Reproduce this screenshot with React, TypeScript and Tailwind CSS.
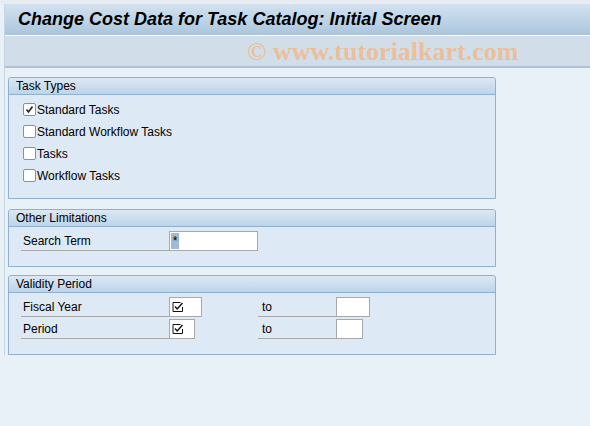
const font = { fontFamily: '"Liberation Sans", Arial, sans-serif' }

function Check({ checked }: { checked?: boolean }) {
  return (
    <span className="flex h-[13px] w-[13px] items-center justify-center rounded-[2px] border border-[#8f8f8f] bg-white">
      {checked && (
        <svg width="9" height="9" viewBox="0 0 9 9">
          <path d="M1.5 4.5 L3.5 7 L7.5 1.5" fill="none" stroke="#222" strokeWidth="1.6" />
        </svg>
      )}
    </span>
  )
}

function ReqMark() {
  return (
    <svg width="12" height="12" viewBox="0 0 12 12">
      <path d="M1 1.5 H8.5 M1 1.5 V10.5 H10.5 V6" fill="none" stroke="#111" strokeWidth="1" />
      <path d="M3 5.5 L5.2 8 L10.5 2" fill="none" stroke="#111" strokeWidth="1.4" />
    </svg>
  )
}

function Group({ title, children, className }: { title: string; children: React.ReactNode; className?: string }) {
  return (
    <div className={`w-[488px] rounded-t-[3px] border border-[#8fb0cf] bg-[#dde9f4] ${className ?? ""}`}>
      <div className="h-[17px] rounded-t-[3px] border-b border-[#8fb0cf] bg-gradient-to-b from-[#dce8f4] to-[#bdd4e9] pl-[7px] text-[12px] leading-[16px] text-black">
        {title}
      </div>
      {children}
    </div>
  )
}

export default function App() {
  const tasks = [
    { label: "Standard Tasks", checked: true },
    { label: "Standard Workflow Tasks" },
    { label: "Tasks" },
    { label: "Workflow Tasks" },
  ]

  return (
    <div className="h-[426px] w-[590px] overflow-hidden bg-[#e8f0f8]" style={font}>
      <div className="h-[4px] bg-[#e9edf2]" />
      <div className="ml-[4px] border-l border-[#c9d6e2]">
        <div className="flex h-[31px] items-center bg-gradient-to-b from-[#d3e2ef] to-[#abc5dd] pl-[13px] text-[18px] font-bold italic text-black">
          Change Cost Data for Task Catalog: Initial Screen
        </div>
        <div className="h-[1px] bg-white" />
        <div
          className="flex h-[32px] items-center border-b-2 border-[#aabdd0] bg-[#cfdde9] pl-[242px] text-[26px] font-bold text-[#ebba90] opacity-90"
          style={{ fontFamily: '"Liberation Serif", "Times New Roman", serif' }}
        >
          © www.tutorialkart.com
        </div>

        <div className="pl-[3px] pt-[9px]">
          <Group title="Task Types" className="h-[122px]">
            <div className="flex flex-col gap-[9px] pl-[14px] pt-[8px]">
              {tasks.map((t) => (
                <div key={t.label} className="flex h-[13px] items-center gap-[1px] text-[12px] text-black">
                  <Check checked={t.checked} />
                  <span>{t.label}</span>
                </div>
              ))}
            </div>
          </Group>

          <Group title="Other Limitations" className="mt-[10px] h-[58px]">
            <div className="flex pl-[12px] pt-[4px]">
              <div className="h-[20px] w-[148px] border-b border-[#a9a9a9] pl-[2px] text-[12px] leading-[20px] text-black">
                Search Term
              </div>
              <div className="flex h-[20px] w-[89px] items-start border border-[#a8a8a8] bg-white p-[1px]">
                <span className="h-[16px] w-[8px] bg-[#9fbad6] text-center text-[12px] leading-[16px] text-black">*</span>
              </div>
            </div>
          </Group>

          <Group title="Validity Period" className="mt-[8px] h-[80px]">
            <div className="flex flex-col gap-[2px] pl-[12px] pt-[4px]">
              {[
                { label: "Fiscal Year", w: "w-[33px]", w2: "w-[34px]" },
                { label: "Period", w: "w-[26px]", w2: "w-[27px]" },
              ].map((r) => (
                <div key={r.label} className="flex items-start">
                  <div className="h-[20px] w-[148px] border-b border-[#a9a9a9] pl-[2px] text-[12px] leading-[20px] text-black">
                    {r.label}
                  </div>
                  <div className="w-[89px]">
                    <div className={`flex h-[20px] ${r.w} items-center border border-[#a8a8a8] bg-white pl-[2px]`}>
                      <ReqMark />
                    </div>
                  </div>
                  <div className="h-[20px] w-[78px] border-b border-[#a9a9a9] pl-[4px] text-[12px] leading-[20px] text-black">
                    to
                  </div>
                  <div className={`h-[20px] ${r.w2} border border-[#a8a8a8] bg-white`} />
                </div>
              ))}
            </div>
          </Group>
        </div>
      </div>
    </div>
  )
}
